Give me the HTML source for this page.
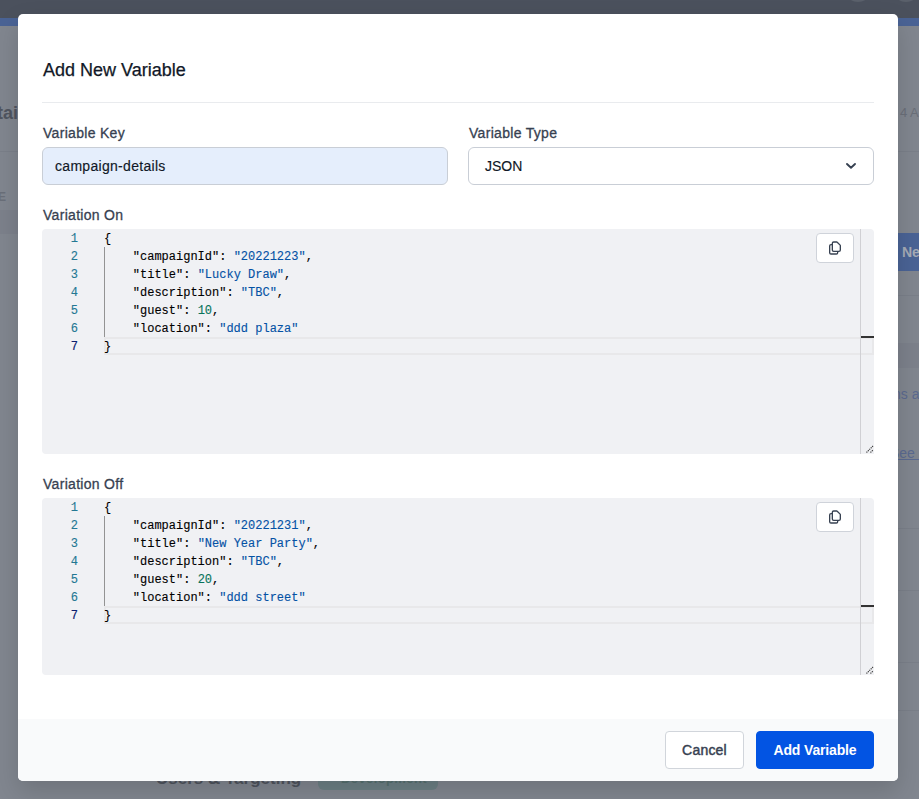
<!DOCTYPE html>
<html><head><meta charset="utf-8">
<style>
*{box-sizing:border-box;margin:0;padding:0}
html,body{width:919px;height:799px;overflow:hidden}
body{position:relative;background:#81868f;font-family:"Liberation Sans",sans-serif;}
.abs{position:absolute}
#topbar{left:0;top:0;width:919px;height:18px;background:#4b515d}
#stripe{left:0;top:18px;width:919px;height:8px;background:#4a6395}
.bgtxt{color:#6a6f7a;font-size:18px;white-space:nowrap}
#modal{left:18px;top:14px;width:880px;height:767px;background:#fff;border-radius:5px;overflow:hidden;box-shadow:0 10px 25px rgba(0,0,0,.15)}
#title{left:25px;top:44px;font-size:18px;color:#111827;-webkit-text-stroke:0.25px #111827;white-space:nowrap;line-height:24px}
#sep{left:24px;top:88px;width:832px;height:1px;background:#e9ebee}
.lbl{font-size:14px;letter-spacing:0.3px;color:#374151;-webkit-text-stroke:0.3px #374151;white-space:nowrap;line-height:20px}
.inp{border:1px solid #c9ced6;border-radius:6px;height:38px;width:406px;top:133px;font-size:14px;color:#111827;white-space:nowrap;line-height:20px;-webkit-text-stroke:0.15px #111827}
#key{left:24px;background:#e5eefc}
#type{left:450px;background:#fff}
.editor{left:24px;width:832px;background:#f0f1f4;border-radius:4px 4px 0 4px;overflow:hidden}
.ed-code{position:absolute;left:0;top:0;font-family:"Liberation Mono",monospace;font-size:12px;line-height:18px;white-space:pre;-webkit-text-stroke-width:0.12px}
.ln{position:absolute;left:0;width:36px;text-align:right;color:#237893;margin-top:1px}
.ln.act{color:#0b216f}
.cl{position:absolute;left:62px;color:#000;margin-top:1px}
.s{color:#0451a5}
.n{color:#08735a}
.guide{position:absolute;left:62px;width:1px;background:#939393}
.curline{position:absolute;left:62px;width:770px;height:18px;border:2px solid #e8e8ea;}
.ruler{position:absolute;left:818px;top:0;width:1px;background:#d0d0d4}
.rmark{position:absolute;left:819px;width:13px;height:2px;background:#333}
.copy{position:absolute;left:774px;top:4px;width:38px;height:30px;background:#fff;border:1px solid #cfd3da;border-radius:4px}
.resz{position:absolute;right:0;bottom:0;width:10px;height:10px}
#footer{left:0;top:705px;width:880px;height:62px;background:#f9fafb}
.btn{position:absolute;top:12px;height:38px;border-radius:4px;font-size:14px;line-height:36px;text-align:center;white-space:nowrap}
#cancel{left:647px;width:79px;background:#fff;border:1px solid #d1d5db;color:#374151;-webkit-text-stroke:0.45px #374151;letter-spacing:0.2px}
#add{left:738px;width:118px;background:#0254e3;color:#fff;border:1px solid #0254e3;font-weight:bold;letter-spacing:-0.15px}
</style></head>
<body>
<div id="topbar" class="abs"></div>
<div id="stripe" class="abs"></div>
<div class="abs" style="left:844px;top:-26px;width:28px;height:28px;border-radius:50%;background:#5a606b"></div>
<div class="abs" style="left:892px;top:-26px;width:28px;height:28px;border-radius:50%;background:#5a606b"></div>
<div class="abs" style="left:0;top:151px;width:919px;height:1px;background:#7a7f89"></div>
<div class="abs" style="left:0;top:210px;width:18px;height:24px;background:#7c818b"></div>
<div class="abs" style="left:898px;top:295px;width:21px;height:1px;background:#7a7f89"></div>
<div class="abs" style="left:898px;top:343px;width:21px;height:25px;background:#7c818b"></div>
<div class="abs" style="left:898px;top:528px;width:21px;height:1px;background:#7a7f89"></div>
<div class="abs" style="left:898px;top:590px;width:21px;height:1px;background:#7a7f89"></div>
<div class="abs" style="left:898px;top:662px;width:21px;height:1px;background:#7a7f89"></div>
<div class="abs" style="left:898px;top:710px;width:21px;height:1px;background:#7a7f89"></div>
<div class="abs bgtxt" style="left:-3px;top:103px;font-size:18px;font-weight:bold;color:#50555f">tai</div>
<div class="abs bgtxt" style="left:-2px;top:190px;font-size:12px;font-weight:bold;color:#6a6f79">E</div>
<div class="abs bgtxt" style="left:900px;top:105px;font-size:13px;color:#6a6f79">4 A</div>
<div class="abs" style="left:890px;top:233px;width:40px;height:38px;background:#4a6395;border-radius:5px"></div>
<div class="abs bgtxt" style="left:902px;top:244px;font-size:14px;font-weight:bold;color:#a5abb6">Ne</div>
<div class="abs bgtxt" style="left:893px;top:386px;font-size:14px;color:#5b6a90">ns a</div>
<div class="abs bgtxt" style="left:890px;top:445px;font-size:14px;color:#5b6a90;text-decoration:underline">See l</div>
<div class="abs bgtxt" style="left:156px;top:769px;font-size:17px;font-weight:bold;color:#4f545e;line-height:19px">Users &amp; Targeting</div>
<div class="abs" style="left:318px;top:766px;width:120px;height:24px;background:#6c7f84;border-radius:6px"></div>
<div class="abs bgtxt" style="left:341px;top:771px;font-size:13px;font-weight:bold;color:#56706f;letter-spacing:0.4px;line-height:15px">Development</div>

<div id="modal" class="abs">
  <div id="title" class="abs">Add New Variable</div>
  <div id="sep" class="abs"></div>

  <div class="abs lbl" style="left:25px;top:109px">Variable Key</div>
  <div class="abs lbl" style="left:451px;top:109px">Variable Type</div>
  <div id="key" class="abs inp"><span style="position:absolute;left:12px;top:8px;letter-spacing:0.3px">campaign-details</span></div>
  <div id="type" class="abs inp"><span style="position:absolute;left:16px;top:8px">JSON</span>
    <svg style="position:absolute;left:376px;top:13px" width="12" height="10" viewBox="0 0 12 10"><path d="M2 3 L6 6.8 L10 3" fill="none" stroke="#374151" stroke-width="1.9" stroke-linecap="round" stroke-linejoin="round"/></svg>
  </div>

  <div class="abs lbl" style="left:25px;top:191px">Variation On</div>
  <div class="abs editor" style="top:215px;height:225px">
    <div class="ed-code">
      <div class="ln" style="top:0">1</div><div class="ln" style="top:18px">2</div><div class="ln" style="top:36px">3</div><div class="ln" style="top:54px">4</div><div class="ln" style="top:72px">5</div><div class="ln" style="top:90px">6</div><div class="ln act" style="top:108px">7</div>
      <div class="curline" style="top:108px"></div>
      <div class="guide" style="top:18px;height:90px"></div>
      <div class="cl" style="top:0">{</div>
      <div class="cl" style="top:18px">    "campaignId": <span class="s">"20221223"</span>,</div>
      <div class="cl" style="top:36px">    "title": <span class="s">"Lucky Draw"</span>,</div>
      <div class="cl" style="top:54px">    "description": <span class="s">"TBC"</span>,</div>
      <div class="cl" style="top:72px">    "guest": <span class="n">10</span>,</div>
      <div class="cl" style="top:90px">    "location": <span class="s">"ddd plaza"</span></div>
      <div class="cl" style="top:108px">}</div>
    </div>
    <div class="ruler" style="height:225px"></div>
    <div class="rmark" style="top:107px"></div>
    <div class="copy"><svg style="position:absolute;left:10px;top:6px" width="16" height="16" viewBox="0 0 24 24" fill="none" stroke="#374151" stroke-width="2" stroke-linecap="round" stroke-linejoin="round"><path d="M8 7v8a2 2 0 002 2h6M8 7V5a2 2 0 012-2h4.586a1 1 0 01.707.293l4.414 4.414a1 1 0 01.293.707V15a2 2 0 01-2 2h-2M8 7H6a2 2 0 00-2 2v10a2 2 0 002 2h8a2 2 0 002-2v-2"/></svg></div>
    <svg class="resz" width="10" height="10" viewBox="0 0 10 10"><path d="M2.5 8.5 L9 2 M6.5 8.5 L9 6" stroke="#3a3a3a" stroke-width="1.1" stroke-dasharray="1.2 0.8"/></svg>
  </div>

  <div class="abs lbl" style="left:25px;top:460px">Variation Off</div>
  <div class="abs editor" style="top:484px;height:177px">
    <div class="ed-code">
      <div class="ln" style="top:0">1</div><div class="ln" style="top:18px">2</div><div class="ln" style="top:36px">3</div><div class="ln" style="top:54px">4</div><div class="ln" style="top:72px">5</div><div class="ln" style="top:90px">6</div><div class="ln act" style="top:108px">7</div>
      <div class="curline" style="top:108px"></div>
      <div class="guide" style="top:18px;height:90px"></div>
      <div class="cl" style="top:0">{</div>
      <div class="cl" style="top:18px">    "campaignId": <span class="s">"20221231"</span>,</div>
      <div class="cl" style="top:36px">    "title": <span class="s">"New Year Party"</span>,</div>
      <div class="cl" style="top:54px">    "description": <span class="s">"TBC"</span>,</div>
      <div class="cl" style="top:72px">    "guest": <span class="n">20</span>,</div>
      <div class="cl" style="top:90px">    "location": <span class="s">"ddd street"</span></div>
      <div class="cl" style="top:108px">}</div>
    </div>
    <div class="ruler" style="height:177px"></div>
    <div class="rmark" style="top:107px"></div>
    <div class="copy"><svg style="position:absolute;left:10px;top:6px" width="16" height="16" viewBox="0 0 24 24" fill="none" stroke="#374151" stroke-width="2" stroke-linecap="round" stroke-linejoin="round"><path d="M8 7v8a2 2 0 002 2h6M8 7V5a2 2 0 012-2h4.586a1 1 0 01.707.293l4.414 4.414a1 1 0 01.293.707V15a2 2 0 01-2 2h-2M8 7H6a2 2 0 00-2 2v10a2 2 0 002 2h8a2 2 0 002-2v-2"/></svg></div>
    <svg class="resz" width="10" height="10" viewBox="0 0 10 10"><path d="M2.5 8.5 L9 2 M6.5 8.5 L9 6" stroke="#3a3a3a" stroke-width="1.1" stroke-dasharray="1.2 0.8"/></svg>
  </div>

  <div id="footer" class="abs">
    <div id="cancel" class="btn">Cancel</div>
    <div id="add" class="btn">Add Variable</div>
  </div>
</div>
</body></html>
